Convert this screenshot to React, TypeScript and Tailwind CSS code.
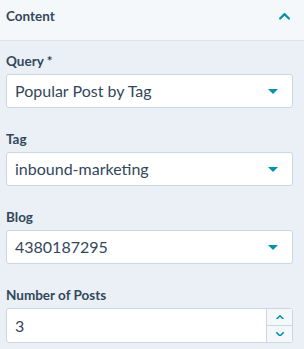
import React from 'react';

const font = {fontFamily: 'Lato, "Open Sans", sans-serif'};

const Caret: React.FC = () => (
    <svg width="10" height="5" viewBox="0 0 10 5" className="shrink-0">
        <path d="M0 0h10L5 5z" fill="#0091ae"/>
    </svg>
);

const Chevron: React.FC<{dir: 'up' | 'down'; size?: number}> = ({dir, size = 10}) => (
    <svg width={size} height={size * 0.6} viewBox="0 0 10 6" fill="none">
        <path
            d={dir === 'up' ? 'M1 5l4-4 4 4' : 'M1 1l4 4 4-4'}
            stroke="#0091ae"
            strokeWidth="2"
            strokeLinecap="round"
            strokeLinejoin="round"
        />
    </svg>
);

const Field: React.FC<{label: string; children: React.ReactNode}> = ({label, children}) => (
    <div className="flex flex-col gap-[3px]">
        <label className="h-[20px] text-[13.5px] font-bold leading-[20px] text-[#33475b]">{label}</label>
        {children}
    </div>
);

const Select: React.FC<{value: string}> = ({value}) => (
    <div className="flex h-[34px] items-center justify-between rounded-[3px] border border-[#cbd6e2] bg-white pl-[8px] pr-[14px]">
        <span className="text-[16px] text-[#33475b]">{value}</span>
        <Caret/>
    </div>
);

const App: React.FC = () => {
    return (
        <div className="flex h-[349px] w-[304px] flex-col overflow-hidden bg-[#eaf0f6]" style={font}>
            <div className="flex h-[41px] shrink-0 items-start justify-between border-b border-[#dfe3eb] bg-[#f5f8fa] pl-[6px] pr-[14px] pt-[6px]">
                <span className="text-[13.5px] font-bold leading-[20px] text-[#33475b]">Content</span>
                <div className="pt-[7px]">
                    <Chevron dir="up" size={11}/>
                </div>
            </div>
            <div className="flex flex-col gap-[21px] pl-[6px] pr-[11px] pt-[10px]">
                <Field label="Query *">
                    <Select value="Popular Post by Tag"/>
                </Field>
                <Field label="Tag">
                    <Select value="inbound-marketing"/>
                </Field>
                <Field label="Blog">
                    <Select value="4380187295"/>
                </Field>
                <Field label="Number of Posts">
                    <div className="flex h-[35px] shrink-0 rounded-[3px] border border-[#cbd6e2] bg-white">
                        <div className="flex flex-1 items-center pl-[8px] text-[16px] text-[#33475b]">3</div>
                        <div className="flex w-[26px] flex-col border-l border-[#cbd6e2] bg-[#f5f8fa]">
                            <div className="flex flex-1 items-center justify-center border-b border-[#cbd6e2]">
                                <Chevron dir="up" size={8}/>
                            </div>
                            <div className="flex flex-1 items-center justify-center">
                                <Chevron dir="down" size={8}/>
                            </div>
                        </div>
                    </div>
                </Field>
            </div>
        </div>
    );
};

export default App;
